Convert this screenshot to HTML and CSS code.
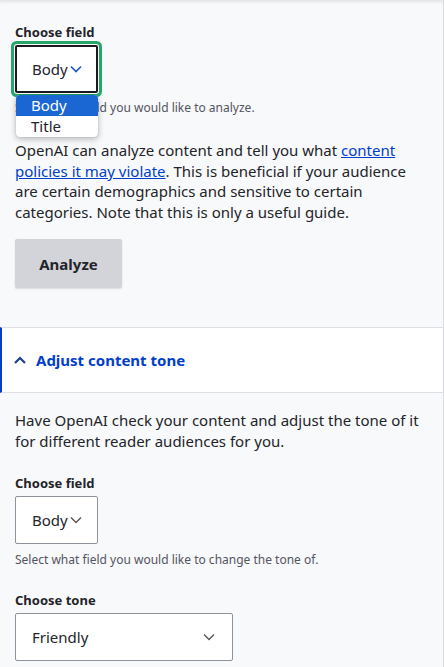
FILE: index.html
```html
<!DOCTYPE html>
<html lang="en">
<head>
<meta charset="utf-8">
<title>OpenAI tools</title>
<link rel="stylesheet" href="styles.css">
</head>
<body>
<div class="panel">
  <section class="block block-first">
    <div class="field">
      <label class="label">Choose field</label>
      <div class="select-wrap">
        <div class="select select-focus">
          <span>Body</span>
          <svg class="chev chev-blue" width="14" height="14" viewBox="0 0 14 14"><path d="M2 4.5 L7 9.5 L12 4.5" fill="none" stroke="currentColor" stroke-width="1.6"/></svg>
        </div>
        <ul class="dropdown">
          <li class="opt opt-active">Body</li>
          <li class="opt">Title</li>
        </ul>
      </div>
      <p class="desc">Select what field you would like to analyze.</p>
    </div>
    <p class="text">OpenAI can analyze content and tell you what <a href="#">content policies it may violate</a>. This is beneficial if your audience are certain demographics and sensitive to certain categories. Note that this is only a useful guide.</p>
    <button class="btn">Analyze</button>
  </section>

  <div class="accordion">
    <svg class="acc-chev" width="14" height="10" viewBox="0 0 14 10"><path d="M2 8 L7 3 L12 8" fill="none" stroke="currentColor" stroke-width="2.2"/></svg>
    <span>Adjust content tone</span>
  </div>

  <section class="block block-second">
    <p class="text">Have OpenAI check your content and adjust the tone of it for different reader audiences for you.</p>
    <div class="field">
      <label class="label">Choose field</label>
      <div class="select">
        <span>Body</span>
        <svg class="chev" width="14" height="14" viewBox="0 0 14 14"><path d="M2 4.5 L7 9.5 L12 4.5" fill="none" stroke="currentColor" stroke-width="1.4"/></svg>
      </div>
      <p class="desc desc-gap">Select what field you would like to change the tone of.</p>
    </div>
    <div class="field">
      <label class="label">Choose tone</label>
      <div class="select select-wide">
        <span>Friendly</span>
        <svg class="chev" width="14" height="14" viewBox="0 0 14 14"><path d="M2 4.5 L7 9.5 L12 4.5" fill="none" stroke="currentColor" stroke-width="1.4"/></svg>
      </div>
    </div>
  </section>
</div>
</body>
</html>
```

FILE: styles.css
```css
* { box-sizing: border-box; }
html, body { margin: 0; padding: 0; }
body {
  background: #f8f9fb;
  font-family: "Noto Sans", "Open Sans", sans-serif;
  color: #232429;
  height: 667px;
  overflow: hidden;
}
.panel {
  width: 444px;
  min-height: 667px;
  border-right: 1px solid #dcdde2;
  box-shadow: inset 0 4px 4px -3px rgba(0,0,0,0.12);
}
.block { padding: 0 15px; }
.block-first { padding-top: 23px; padding-bottom: 39px; }
.field { display: flex; flex-direction: column; align-items: flex-start; }
.label {
  font-size: 13px;
  font-weight: 700;
  line-height: 18px;
  margin-bottom: 4px;
}
.select-wrap { position: relative; }
.select {
  height: 48px;
  width: 83px;
  border: 1px solid #8e929c;
  border-radius: 2px;
  background: #fff;
  display: flex;
  align-items: center;
  padding-left: 16px;
  padding-right: 10px;
  font-size: 15px;
  gap: 1px;
}
.select-wide { width: 218px; justify-content: space-between; padding-right: 16px; }
.select-focus {
  border: 2px solid #1b1b1f;
  padding-left: 15px;
  box-shadow: 0 0 0 1px #fff, 0 0 0 4px #26a769;
  border-radius: 2px;
}
.chev { color: #55565b; flex: none; }
.chev-blue { color: #1b55c8; }
.dropdown {
  position: absolute;
  left: 1px;
  top: 50px;
  width: 82px;
  margin: 0;
  padding: 0;
  list-style: none;
  background: #fff;
  border-radius: 4px;
  overflow: hidden;
  box-shadow: 0 2px 6px rgba(0,0,0,0.28), 0 0 1px rgba(0,0,0,0.3);
  z-index: 2;
}
.opt {
  font-size: 15px;
  line-height: 21px;
  padding-left: 15px;
  color: #232429;
}
.opt-active { background: #1a66d2; color: #fff; }
.desc {
  margin: 7px 0 0;
  font-size: 12px;
  line-height: 16px;
  color: #545560;
}
.desc-gap { margin-top: 8px; }
.text {
  margin: 24px 0 0;
  font-size: 15px;
  line-height: 20.5px;
  width: 410px;
}
.text a { color: #003ecc; }
.btn {
  margin-top: 17px;
  width: 107px;
  height: 49px;
  border: none;
  border-radius: 2px;
  background: #d3d4d9;
  font-family: inherit;
  font-size: 15px;
  font-weight: 700;
  color: #232429;
  box-shadow: 0 1px 2px rgba(0,0,0,0.12);
}
.accordion {
  height: 66px;
  background: #fff;
  border-top: 1px solid #dedfe4;
  border-bottom: 1px solid #dedfe4;
  border-left: 2px solid #003ecc;
  display: flex;
  align-items: center;
  gap: 9px;
  padding-left: 11px;
  color: #003ecc;
  font-size: 15px;
  font-weight: 700;
}
.acc-chev { color: #1f3f8f; }
.block-second { padding-top: 17px; }
.block-second .text { margin: 0 0 23px; }
.block-second .field + .field { margin-top: 23px; }
```
